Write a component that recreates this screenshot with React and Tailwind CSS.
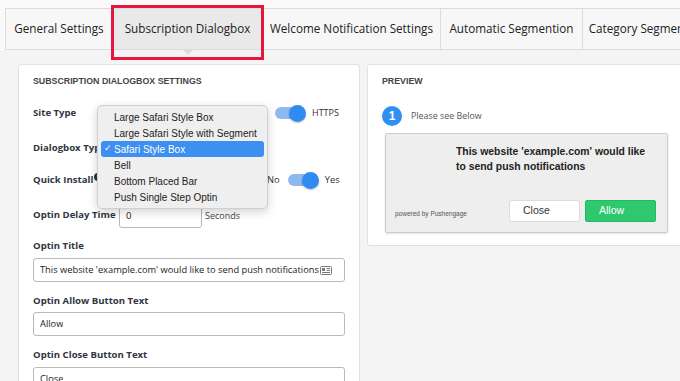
import React from "react";

const OS = { fontFamily: '"Open Sans", "Liberation Sans", sans-serif' };
const AR = { fontFamily: '"Liberation Sans", Arial, sans-serif' };

function Toggle() {
  return (
    <div className="relative w-[31px] h-[17px] flex items-center shrink-0">
      <div className="w-[28px] h-[12px] rounded-full bg-[#8fb8ef]" />
      <div className="absolute right-0 top-0 w-[17px] h-[17px] rounded-full bg-[#2f8bf2] shadow-[0_1px_2px_rgba(0,0,0,0.25)]" />
    </div>
  );
}

function Label({ children, className = "" }) {
  return (
    <div className={"text-[9.6px] font-bold text-[#2f3640] whitespace-nowrap shrink-0 " + className} style={OS}>
      {children}
    </div>
  );
}

function TextInput({ value, icon }) {
  return (
    <div className="h-[24px] w-[312px] rounded-[3px] border border-[#b9b9b9] bg-white flex items-center px-[6px] text-[9.3px] text-[#222]" style={OS}>
      <span className="whitespace-nowrap overflow-hidden">{value}</span>
      {icon && (
        <svg width="12" height="9" viewBox="0 0 12 9" className="shrink-0 ml-[1px]">
          <rect x="0.5" y="0.5" width="11" height="8" rx="1" fill="none" stroke="#777" />
          <rect x="2" y="2" width="3" height="3" fill="#777" />
          <line x1="6.5" y1="2.5" x2="10" y2="2.5" stroke="#777" />
          <line x1="6.5" y1="4.5" x2="10" y2="4.5" stroke="#777" />
          <line x1="2" y1="6.5" x2="10" y2="6.5" stroke="#777" />
        </svg>
      )}
    </div>
  );
}

export default function App() {
  const tabs = [
    { t: "General Settings", w: 107 },
    { t: "Subscription Dialogbox", w: 150, active: true },
    { t: "Welcome Notification Settings", w: 178 },
    { t: "Automatic Segmention", w: 142 },
    { t: "Category Segmentation", w: 140 },
  ];
  const items = [
    "Large Safari Style Box",
    "Large Safari Style with Segment",
    "Safari Style Box",
    "Bell",
    "Bottom Placed Bar",
    "Push Single Step Optin",
  ];
  return (
    <div className="relative w-[680px] h-[381px] overflow-hidden bg-[#f4f4f4]">
      {/* tab bar */}
      <div className="pt-[8px] pl-[5px] bg-[#fafafa]">
        <div className="flex h-[42px] border border-[#dcdcdc] bg-[#f7f7f7] w-[720px]">
          {tabs.map((tb, i) => (
            <div
              key={i}
              className={
                "relative shrink-0 flex items-center justify-center text-[11.7px] text-[#222] border-r border-[#dcdcdc] whitespace-nowrap " +
                (tb.active ? "bg-[#e9e9e9]" : "")
              }
              style={{ ...OS, width: tb.w }}
            >
              {tb.t}
              {tb.active && (
                <div className="absolute left-1/2 -translate-x-1/2 top-full w-0 h-0 border-l-[6px] border-r-[6px] border-t-[6px] border-l-transparent border-r-transparent border-t-[#dcdcdc]" />
              )}
            </div>
          ))}
        </div>
      </div>

      {/* red highlight */}
      <div className="absolute left-[111px] top-[5px] w-[153px] h-[55px] border-[3px] border-[#e5173f]" />

      {/* content */}
      <div className="flex pl-[18px] pt-[14px] gap-[7px]">
        {/* left card */}
        <div className="relative w-[342px] h-[340px] shrink-0 bg-white border border-[#e2e2e2] rounded-[3px] pl-[14px] pr-[14px] pt-[9px]">
          <div className="h-[16px] flex items-center text-[8.8px] font-bold text-[#444] whitespace-nowrap" style={AR}>
            SUBSCRIPTION DIALOGBOX SETTINGS
          </div>

          <div className="mt-[13px] h-[20px] flex items-center">
            <Label className="w-[242px]">Site Type</Label>
            <Toggle />
            <span className="ml-[6px] text-[9px] text-[#333]" style={OS}>HTTPS</span>
          </div>

          <div className="mt-[15px] h-[20px] flex items-center">
            <Label className="w-[86px]">Dialogbox Type</Label>
            <div className="w-[149px] h-[19px] border-r-2 border-[#2b5fb8] bg-white" />
          </div>

          <div className="mt-[12px] h-[20px] flex items-center">
            <div className="w-[234px] shrink-0 flex items-center">
              <Label>Quick Install</Label>
              <div className="ml-[1px] -mt-[5px] w-[8px] h-[8px] rounded-full bg-[#333] text-white text-[6px] leading-[8px] text-center font-bold shrink-0" style={AR}>?</div>
            </div>
            <span className="text-[9.4px] text-[#333]" style={OS}>No</span>
            <div className="ml-[8px]"><Toggle /></div>
            <span className="ml-[6px] text-[9.4px] text-[#333]" style={OS}>Yes</span>
          </div>

          <div className="mt-[14px] h-[24px] flex items-center">
            <Label className="w-[86px] -mt-[2px]">Optin Delay Time</Label>
            <div className="w-[83px] h-[24px] rounded-[3px] border border-[#b9b9b9] bg-white px-[6px] flex items-center text-[9.6px] text-[#222]" style={OS}>0</div>
            <span className="ml-[3px] text-[9px] text-[#444]" style={OS}>Seconds</span>
          </div>

          <Label className="mt-[10px] h-[16px] flex items-center">Optin Title</Label>
          <div className="mt-[4px]">
            <TextInput value="This website 'example.com' would like to send push notifications" icon />
          </div>

          <Label className="mt-[11px] h-[16px] flex items-center">Optin Allow Button Text</Label>
          <div className="mt-[3px]">
            <TextInput value="Allow" />
          </div>

          <Label className="mt-[11px] h-[16px] flex items-center">Optin Close Button Text</Label>
          <div className="mt-[4px]">
            <TextInput value="Close" />
          </div>

          {/* dropdown menu */}
          <div className="absolute left-[78px] top-[40px] w-[171px] h-[104px] rounded-[5px] bg-[#efefef] border border-[#cfcfcf] shadow-[0_3px_10px_rgba(0,0,0,0.18)] pt-[3px] px-[3px]" style={AR}>
            {items.map((it, i) => {
              const sel = i === 2;
              return (
                <div
                  key={i}
                  className={
                    "h-[16px] flex items-center text-[10px] rounded-[3px] whitespace-nowrap " +
                    (sel ? "bg-[#3d8ff0] text-white" : "text-[#222]")
                  }
                >
                  <span className="w-[13px] shrink-0 pl-[3px] text-[9px]">{sel ? "✓" : ""}</span>
                  {it}
                </div>
              );
            })}
          </div>
        </div>

        {/* right card */}
        <div className="w-[330px] h-[182px] shrink-0 bg-white border border-[#e2e2e2] rounded-[3px] pl-[14px] pt-[9px]">
          <div className="h-[16px] flex items-center text-[8.8px] font-bold text-[#444]" style={AR}>PREVIEW</div>
          <div className="mt-[16px] flex items-center h-[20px]">
            <div className="w-[20px] h-[20px] rounded-full bg-[#2f8ff2] text-white text-[12px] font-bold flex items-center justify-center" style={AR}>1</div>
            <span className="ml-[9px] text-[8.9px] text-[#555]" style={OS}>Please see Below</span>
          </div>
          <div className="mt-[7px] ml-[3px] w-[283px] h-[100px] bg-[#eeeeee] border border-[#cdcdcd] rounded-[2px] shadow-[0_1px_2px_rgba(0,0,0,0.12)] relative" style={AR}>
            <div className="pl-[70px] pt-[10px] text-[10.4px] font-bold text-[#222] leading-[15px]">
              This website 'example.com' would like<br />to send push notifications
            </div>
            <div className="absolute left-[9px] bottom-[10px] right-[11px] h-[22px] flex items-center">
              <span className="text-[6.5px] text-[#555] flex-1 mt-[6px]">powered by Pushengage</span>
              <div className="w-[71px] h-[22px] bg-white border border-[#dcdcdc] rounded-[3px] pl-[13px] flex items-center text-[10.5px] text-[#333]">Close</div>
              <div className="ml-[5px] w-[71px] h-[22px] bg-[#2ec86f] border border-[#27b862] rounded-[2px] pl-[13px] flex items-center text-[10.5px] text-white">Allow</div>
            </div>
          </div>
        </div>
      </div>
    </div>
  );
}
